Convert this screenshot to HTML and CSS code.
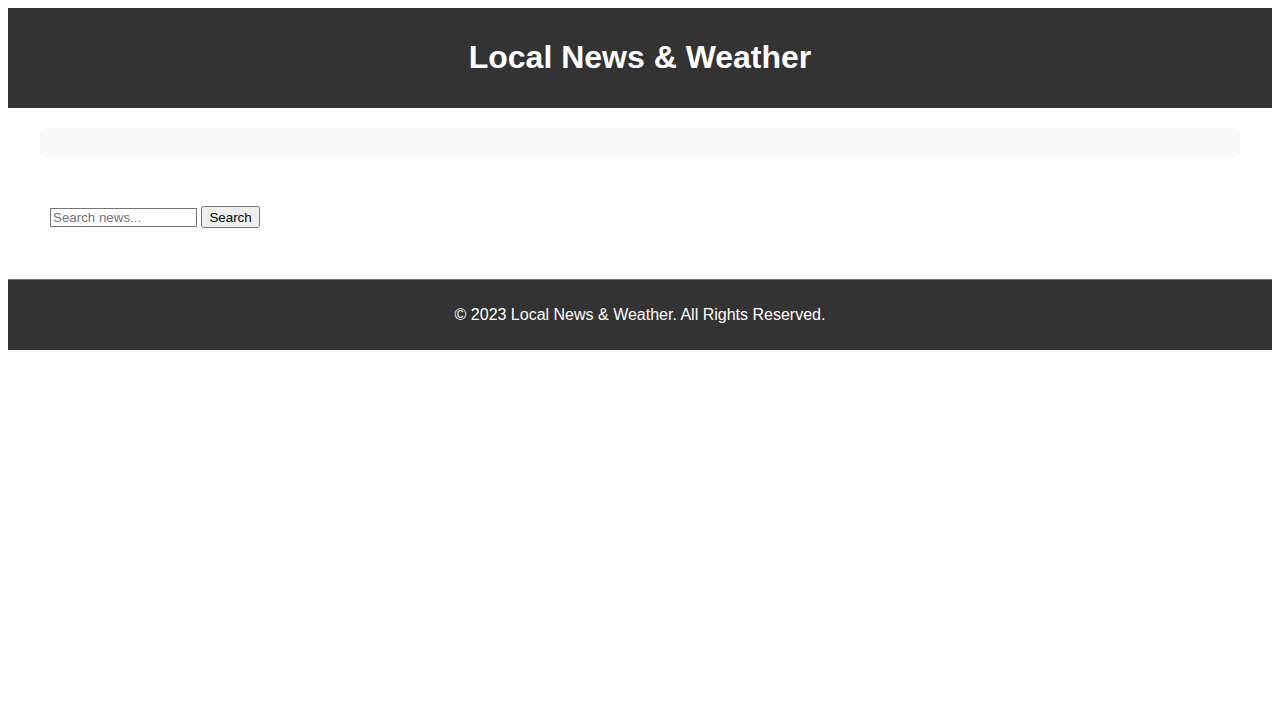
FILE: index.html
```html
<!DOCTYPE html>
<html lang="en">
<head>
<meta charset="utf-8">
<title>Local News &amp; Weather</title>
<link rel="stylesheet" href="styles.css">
</head>
<body>
<header class="site-header">
  <h1 class="site-title">Local News &amp; Weather</h1>
</header>
<main class="main">
  <section class="weather"></section>
  <section class="search">
    <input class="search-input" type="text" placeholder="Search news...">
    <button class="search-button" type="button">Search</button>
  </section>
</main>
<footer class="site-footer">
  <p class="footer-text">&copy; 2023 Local News &amp; Weather. All Rights Reserved.</p>
</footer>
</body>
</html>
```
FILE: styles.css
```css
body {
  margin: 8px;
  font-family: "Liberation Sans", Arial, sans-serif;
  color: #000;
  background: #fff;
}
.site-header {
  background: #333;
  color: #fff;
  padding: 10px;
  text-align: center;
}
.site-title {
  font-size: 32px;
  font-weight: bold;
  margin: 21.44px 0;
}
.main {
  max-width: 1200px;
  margin: 0 auto;
  padding: 20px;
}
.weather {
  background: #f9f9f9;
  border-radius: 8px;
  height: 30px;
  margin-bottom: 38px;
}
.search {
  width: 100%;
  padding: 10px;
  margin-bottom: 21px;
}
.search-input {
  font-family: "Liberation Sans", Arial, sans-serif;
  font-size: 13.33px;
  width: 141px;
  padding: 1px 2px;
  border: 1px solid #767676;
}
.search-button {
  font-family: "Liberation Sans", Arial, sans-serif;
  font-size: 13.33px;
  padding: 2px 6px;
  height: 22px;
}
.site-footer {
  background: #333;
  color: #fff;
  border-top: 1px solid #777;
  padding: 10px;
  text-align: center;
}
.footer-text {
  margin: 16px 0;
  font-size: 16px;
}
```
